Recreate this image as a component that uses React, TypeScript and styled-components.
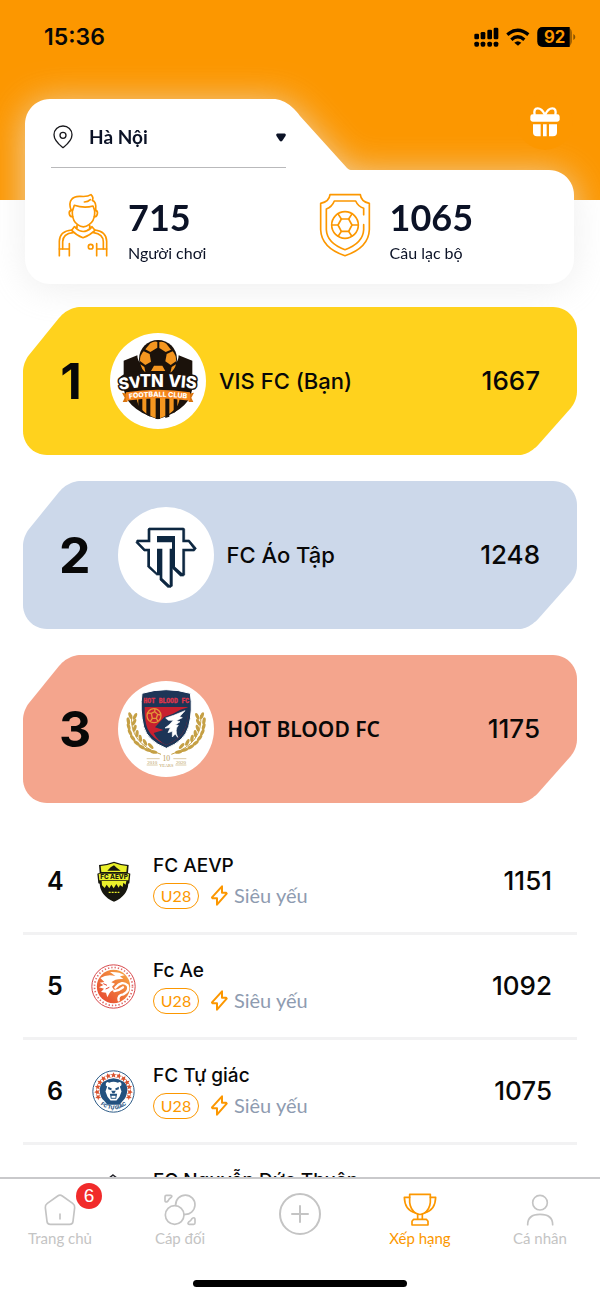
import React from 'react';
import styled, { createGlobalStyle } from 'styled-components';

const ORANGE = '#fc9700';
const INK = '#0b1226';
const UI = `Inter, "Liberation Sans", sans-serif`;
const SOFT = `Lato, "Noto Sans", sans-serif`;
const WIDE = `"Noto Sans", sans-serif`;

/* Responsive rounded outlines: each corner is anchored to a side of the box. */
type Pt = [number, number];
type Corner = { right?: boolean; bottom?: boolean; from: Pt; via: Pt; to: Pt };

const outline = (corners: Corner[]) => {
  const points: string[] = [];
  corners.forEach(({ right, bottom, from, via, to }) => {
    const ax = [via[0] - from[0], via[1] - from[1]];
    const bx = [to[0] - via[0], to[1] - via[1]];
    const cos = (ax[0] * bx[0] + ax[1] * bx[1]) / (Math.hypot(ax[0], ax[1]) * Math.hypot(bx[0], bx[1]));
    const w = Math.cos(Math.acos(cos) / 2);
    for (let i = 0; i <= 12; i += 1) {
      const t = i / 12;
      const a = (1 - t) * (1 - t);
      const b = 2 * w * t * (1 - t);
      const c = t * t;
      const at = (k: 0 | 1) => ((a * from[k] + b * via[k] + c * to[k]) / (a + b + c)).toFixed(2);
      points.push(`calc(${right ? 100 : 0}% + ${at(0)}px) calc(${bottom ? 100 : 0}% + ${at(1)}px)`);
    }
  });
  return `polygon(${points.join(', ')})`;
};

const podiumOutline = outline([
  { from: [0, 65], via: [0, 56], to: [6, 48] },
  { from: [36, 11], via: [45, 0], to: [58, 0] },
  { right: true, from: [-24, 0], via: [0, 0], to: [0, 24] },
  { right: true, bottom: true, from: [0, -64], via: [0, -54], to: [-7, -46] },
  { right: true, bottom: true, from: [-38, -11], via: [-48, 0], to: [-58, 0] },
  { bottom: true, from: [24, 0], via: [0, 0], to: [0, -24] },
]);

const summaryOutline = outline([
  { from: [0, 25], via: [0, 0], to: [25, 0] },
  { from: [248, 0], via: [263, 0], to: [275, 17] },
  { from: [322, 69], via: [324, 71], to: [326, 71] },
  { right: true, from: [-25, 71], via: [0, 71], to: [0, 96] },
  { right: true, bottom: true, from: [0, -25], via: [0, 0], to: [-25, 0] },
  { bottom: true, from: [25, 0], via: [0, 0], to: [0, -25] },
]);

const Global = createGlobalStyle`
  *, *::before, *::after { box-sizing: border-box; }
  body { margin: 0; background: #fff; font-family: ${UI}; color: #080808; }
  ol, h1, p { margin: 0; padding: 0; }
  ol { list-style: none; }
  svg { display: block; }
`;

const Screen = styled.div`
  display: flex;
  flex-direction: column;
  height: 100vh;
`;

const Scroller = styled.main`
  flex: 1;
  min-height: 0;
  overflow-y: auto;
  scrollbar-width: none;
  background: linear-gradient(${ORANGE}, ${ORANGE}) no-repeat 0 0 / 100% 200px;
`;

const StatusBar = styled.div`
  display: flex;
  align-items: center;
  justify-content: space-between;
  height: 73px;
  padding: 0 24px 0 44px;
`;

const Clock = styled.span`
  font-size: 23px;
  line-height: 28px;
  font-weight: 600;
`;

const StatusIcons = styled.div`
  display: flex;
  align-items: center;
  gap: 7px;
`;

const Hero = styled.header`
  display: grid;
  padding: 0 26px 0 25px;
  margin-top: 21px;
  > * { grid-area: 1 / 1; }
`;

const SummaryShadow = styled.div`
  margin-top: 5px;
  filter: drop-shadow(0 4px 18px rgba(232, 232, 232, 0.75));
`;

const Summary = styled.div`
  padding: 8px 0 0 26px;
  height: 185px;
  background: #fff;
  clip-path: ${summaryOutline};
`;

const GiftButton = styled.button`
  display: grid;
  place-items: center;
  justify-self: end;
  z-index: 1;
  width: 56px;
  height: 56px;
  margin-right: 1px;
  padding: 0;
  border: 0;
  border-radius: 50%;
  background: ${ORANGE};
`;

const CityField = styled.label`
  display: flex;
  align-items: center;
  gap: 16px;
  width: 235px;
  height: 61px;
  padding-left: 2px;
  border-bottom: 1px solid #b9b9bb;
`;

const CitySelect = styled.select`
  flex: 1;
  min-width: 0;
  height: 32px;
  padding: 0 0 2px;
  border: 0;
  appearance: none;
  background: transparent;
  font-family: ${SOFT};
  font-size: 19px;
  font-weight: 700;
  color: ${INK};
`;

const Stats = styled.div`
  display: grid;
  grid-template-columns: 1fr 1fr;
  padding-top: 25px;
`;

const Stat = styled.div`
  display: flex;
  gap: 19px;
  padding-left: 6px;
`;

const StatValue = styled.p`
  padding-top: 2px;
  font-family: ${SOFT};
  font-size: 36px;
  line-height: 44px;
  font-weight: 700;
  color: ${INK};
`;

const StatLabel = styled.p`
  font-family: ${SOFT};
  font-size: 16px;
  line-height: 28px;
  color: ${INK};
`;

const Podium = styled.ol`
  display: grid;
  gap: 26px;
  padding: 23px 23px 0;
`;

const PodiumCard = styled.li<{ $tone: string }>`
  display: flex;
  align-items: center;
  height: 148px;
  padding: 0 37px 0 36px;
  background: ${(p) => p.$tone};
  clip-path: ${podiumOutline};
`;

const Place = styled.span`
  min-width: 24px;
  margin-right: 27px;
  font-size: 50px;
  line-height: 56px;
  font-weight: 700;
  text-align: center;
`;

const Disc = styled.span`
  flex: none;
  width: 96px;
  height: 96px;
  margin-right: 13px;
  border-radius: 50%;
  background: #fff;
  overflow: hidden;
`;

const PodiumName = styled.span<{ $wide?: boolean }>`
  flex: 1;
  font-family: ${(p) => (p.$wide ? WIDE : UI)};
  font-size: ${(p) => (p.$wide ? 21 : 22)}px;
  line-height: 28px;
  font-weight: ${(p) => (p.$wide ? 600 : 500)};
`;

const Score = styled.span`
  font-size: 26px;
  line-height: 32px;
  font-weight: 500;
`;

const List = styled.ol`
  padding: 27px 23px 0;
`;

const Row = styled.li`
  display: flex;
  align-items: center;
  height: 105px;
  padding: 0 25px 0 24px;
  border-bottom: 3px solid #f2f2f3;
`;

const Rank = styled.span`
  width: 44px;
  font-size: 25px;
  line-height: 32px;
  font-weight: 600;
`;

const Crest = styled.span`
  flex: none;
  width: 45px;
  height: 45px;
  margin-right: 17px;
`;

const Info = styled.div`
  flex: 1;
  min-width: 0;
`;

const TeamName = styled.p`
  margin-bottom: 5px;
  font-size: 19px;
  line-height: 24px;
  font-weight: 500;
  white-space: nowrap;
`;

const Tags = styled.div`
  display: flex;
  align-items: center;
  font-family: ${SOFT};
`;

const Age = styled.span`
  display: grid;
  place-items: center;
  width: 46px;
  height: 26px;
  margin-right: 12px;
  border: 1px solid ${ORANGE};
  border-radius: 13px;
  font-size: 16px;
  line-height: 16px;
  color: ${ORANGE};
`;

const Level = styled.span`
  margin-left: 6px;
  padding-bottom: 2px;
  font-size: 20px;
  line-height: 24px;
  color: #8e9bb0;
`;

const TabBar = styled.nav`
  flex: none;
  border-top: 2px solid #c9c9cb;
  background: #fff;
`;

const Tabs = styled.div`
  display: grid;
  grid-template-columns: repeat(5, 1fr);
  height: 101px;
`;

const Tab = styled.a<{ $active?: boolean }>`
  display: flex;
  flex-direction: column;
  align-items: center;
  padding-top: 14px;
  font-family: ${SOFT};
  font-size: 15px;
  line-height: 20px;
  text-decoration: none;
  color: ${(p) => (p.$active ? ORANGE : '#c4c4c4')};
`;

const TabIcon = styled.span`
  position: relative;
  margin-bottom: 1px;
`;

const Badge = styled.span`
  position: absolute;
  top: -10px;
  left: 33px;
  display: grid;
  place-items: center;
  width: 26px;
  height: 26px;
  border-radius: 50%;
  background: #f12b2b;
  color: #fff;
  font-family: "Liberation Sans", sans-serif;
  font-size: 19px;
  line-height: 26px;
`;

const HomeIndicator = styled.div`
  width: 214px;
  height: 7px;
  margin: 0 auto 12px;
  border-radius: 4px;
  background: #000;
`;

const line = { fill: 'none', stroke: 'currentColor', strokeLinecap: 'round', strokeLinejoin: 'round' } as const;

const SignalIcon = () => (
  <svg width="25" height="20" viewBox="523 79 75 60" aria-hidden="true">
    {[[524, 99], [543, 94], [563, 87], [582, 81]].map(([x, y]) => (
      <g key={x}>
        <rect x={x} y={y} width="14" height={116 - y} rx="4" />
        <rect x={x} y="123" width="14" height="15" rx="5" />
      </g>
    ))}
  </svg>
);

const WifiIcon = () => (
  <svg width="24" height="18" viewBox="620 80 72 54" aria-hidden="true">
    <g fill="none" stroke="#000" strokeWidth="10">
      <path d="M624 100 Q655 74 687 100" />
      <path d="M636 115 Q655 98 675 115" />
    </g>
    <path d="M645 124 Q655 115 666 124 L656 133 Z" />
  </svg>
);

const BatteryIcon = () => (
  <svg width="39" height="20" viewBox="710 78 117 60" aria-label="92%">
    <rect x="711" y="78" width="104" height="60" rx="17" opacity=".35" />
    <path d="M728 78 H808 V138 H728 Q711 138 711 121 V95 Q711 78 728 78Z" />
    <path d="M819 99 Q825 102 825 108 Q825 114 819 117Z" opacity=".45" />
    <text x="763" y="126" textAnchor="middle" fontFamily="Inter, sans-serif" fontWeight="700" fontSize="50" fill={ORANGE}>92</text>
  </svg>
);

const GiftIcon = () => (
  <svg width="30" height="31" viewBox="690 320 90 93" fill="#fff" aria-hidden="true">
    <rect x="691" y="342" width="88" height="22" rx="7" />
    <path d="M699 372 H722 V408 H711 Q699 408 699 396Z M729 372 H740 V408 H729Z M747 372 H771 V396 Q771 408 759 408 H747Z" />
    <path d="M704 344 Q700 324 713 324 Q726 324 735 344 Q744 324 757 324 Q770 324 766 344" fill="none" stroke="#fff" strokeWidth="7" />
  </svg>
);

const PinIcon = () => (
  <svg width="20" height="24" viewBox="159 377 60 72" aria-hidden="true">
    <g fill="none" stroke="#1b1b1f" strokeWidth="4" strokeLinejoin="round">
      <path d="M189 445 C178 436 162 424 162 406 C162 391 174 380 189 380 C204 380 216 391 216 406 C216 424 200 436 189 445Z" />
      <circle cx="189" cy="408" r="9" />
    </g>
  </svg>
);

const CaretIcon = () => (
  <svg width="10" height="9" viewBox="0 0 10 9" fill={INK} aria-hidden="true">
    <path d="M1.400 .5 H8.600 Q10.400 1 9.500 3 L6.300 7.800 Q5 9.200 3.700 7.800 L.5 3 Q-.4 1 1.400 .5Z" />
  </svg>
);

const PlayerIcon = () => (
  <svg width="52" height="64" viewBox="170 580 156 192" color={ORANGE} aria-hidden="true">
    <g {...line} strokeWidth="5">
      <path d="M216 630 V642 Q217 664 232 675 Q249 688 266 675 Q282 664 283 642 V630" />
      <path d="M212 630 Q205 610 213 600 Q221 589 240 590 Q262 592 272 585 Q281 594 276 602 Q289 606 286 632" />
      <path d="M217 632 L222 617 Q252 627 278 619 L283 632 M252 607 Q263 607 270 600" />
      <path d="M213 632 Q205 634 207 643 Q209 652 217 651 M286 632 Q293 634 291 643 Q289 652 282 651" />
      <path d="M230 677 V684 L222 681 L214 692 Q228 707 248 714 Q269 707 284 692 L275 681 L268 684 V677" />
      <path d="M226 685 Q248 706 272 685" />
      <path d="M214 691 Q178 694 177 725 V768 M284 691 Q318 695 319 725 V768" />
      <path d="M218 699 Q188 702 187 726 V748 M280 699 Q309 704 309 726 V748" />
      <path d="M177 748 H207 M207 732 V768 M289 732 V768 M289 748 H319" />
      <circle cx="271" cy="741" r="7" />
    </g>
  </svg>
);

const ClubIcon = () => (
  <svg width="52" height="64" viewBox="55 580 156 192" color={ORANGE} aria-hidden="true">
    <g {...line} strokeWidth="5">
      <path d="M88 585 H179 Q181 606 206 611 V690 Q204 744 133 768 Q62 744 60 690 V611 Q86 606 88 585Z" />
      <path d="M189 645 V626 Q172 620 165 604 H101 Q94 622 77 628 V690 Q79 730 133 750 Q187 730 189 690 V675" />
      <circle cx="133" cy="676" r="40" />
      <path d="M122 658 H144 L154 676 L144 695 H122 L112 676Z" />
      <path d="M122 658 L113 644 M144 658 L153 644 M154 676 H172 M144 695 L153 709 M122 695 L113 709 M112 676 H94" />
    </g>
  </svg>
);

const BoltIcon = () => (
  <svg width="17" height="21" viewBox="574 134 51 63" color={ORANGE} aria-hidden="true">
    <path d="M607 138 L577 171 L579 174 H592 V193 L621 160 L619 157 H607Z" {...line} strokeWidth="6" />
  </svg>
);

const VisLogo = () => (
  <svg width="96" height="96" viewBox="30 25 288 288" aria-hidden="true">
    <path d="M71 108 L112 92 Q112 130 174 130 Q236 130 236 92 L277 108 V180 Q280 250 174 284 Q68 250 71 180Z" fill="#1b120b" />
    <circle cx="174" cy="103" r="57" fill="#1b120b" />
    <g fill="#f5961f">
      <path d="M151 56 Q163 48 172 52 V69 L151 82 L136 74Z" />
      <path d="M178 52 Q189 49 199 57 L213 75 L197 82 L178 70Z" />
      <path d="M131 80 L149 88 L153 111 L136 121 L120 109 Q119 92 131 80Z" />
      <path d="M218 80 Q230 93 228 110 L212 121 L196 110 L200 88Z" />
      <path d="M121 119 L133 127 L137 145 Q124 133 121 119Z M228 119 L215 127 L211 145 Q225 133 228 119Z M162 123 H187 L196 139 H153Z" />
    </g>
    <path d="M155 90 L174 77 L193 89 L187 114 H161Z" fill="#1b120b" />
    <path d="M110 220 H239 Q236 262 174 283 Q112 262 110 220Z" fill="#f5961f" />
    <path d="M115 220 H127 V265 L115 250Z M139 220 H151 V276 L139 270Z M167 220 H180 V283 H167Z M196 220 H208 V276 L196 280Z M221 220 H232 V256 L221 266Z" fill="#1b120b" />
    <path d="M56 172 Q58 150 92 140 L262 146 Q290 152 292 172 L286 194 H66Z" fill="#1b120b" />
    <g fontFamily="Inter, sans-serif" fontWeight="800" fill="#fff" stroke="#1b120b" strokeWidth="9" strokeLinejoin="round" paintOrder="stroke">
      <text fontSize="48" transform="rotate(-7 60 194)" x="58" y="195">SV</text>
      <text fontSize="50" x="119" y="186">TN</text>
      <text fontSize="50" transform="rotate(5 204 186)" x="203" y="185">VIS</text>
    </g>
    <path d="M66 204 L82 207 V232 H68 L74 219Z M282 204 L266 207 V232 H280 L274 219Z" fill="#d9740f" />
    <path d="M78 203 Q174 188 270 203 V228 Q174 213 78 228Z" fill="#f5861c" />
    <path id="ribbonArc" d="M80 223 Q174 209 268 223" fill="none" />
    <text fontFamily="Inter, sans-serif" fontSize="21" fontWeight="800" fill="#fff">
      <textPath href="#ribbonArc" startOffset="50%" textAnchor="middle">FOOTBALL CLUB</textPath>
    </text>
  </svg>
);

const AoTapLogo = () => (
  <svg width="96" height="96" viewBox="35 21 288 288" aria-hidden="true">
    <path d="M128 84 H232 L235 87 V120 H249 L270 145 L264 153 H235 V225 L231 228 H222 L198 205 V258 L194 262 H184 L161 240 V225 H151 L124 201 V153 H113 L89 128 L92 120 H125 V87Z" fill="#0d2741" stroke="#0d2741" strokeWidth="2" />
    <path d="M132 91 H228 V127 H246 L261 146 H228 V220 L206 200 V108 H152 V127 H197 V146 H190 V256 L168 235 V146 H152 V218 L131 198 V146 H116 L97 127 H132Z" fill="#fff" />
  </svg>
);

const laurel = [
  [76, 122, -20], [70, 138, -10], [71, 155, -15], [75, 172, -25], [83, 189, -38], [95, 204, -50], [110, 216, -62], [128, 225, -72], [146, 231, -80],
  [90, 124, 25], [87, 142, 28], [89, 160, 18], [96, 176, 5], [106, 190, -10], [120, 202, -25], [137, 213, -42],
];

const HotBloodLogo = () => (
  <svg width="96" height="96" viewBox="39 18 288 288" aria-hidden="true">
    {[undefined, 'translate(367 0) scale(-1 1)'].map((side, k) => (
      <g key={k} transform={side} fill="#c5a045">
        {laurel.map(([x, y, a]) => (
          <ellipse key={`${x}-${y}`} cx={x} cy={y} rx="5" ry="11" transform={`rotate(${a} ${x} ${y})`} />
        ))}
        <path d="M80 120 Q72 205 168 238" fill="none" stroke="#c5a045" strokeWidth="3" />
      </g>
    ))}
    <path d="M111 55 Q183 33 256 55 Q264 105 251 155 Q239 198 184 220 Q128 198 116 155 Q104 105 111 55Z" fill="#1d3557" stroke="#fff" strokeWidth="3" />
    <path d="M119 96 H248 Q250 140 238 165 Q226 192 184 210 Q142 192 128 162 Q118 138 119 96Z" fill="#c8202f" />
    <path d="M250 97 L226 104 L204 116 L178 126 L150 157 L175 165 L146 174 Q158 198 184 210 Q226 192 238 165 Q250 140 250 97Z" fill="#1d3557" />
    <path d="M240 107 L206 121 L182 129 L190 136 L205 136 L192 150 L180 159 L196 158 L189 173 L202 169 V186 L211 177 L218 187 Q208 164 220 151 L211 150 L225 140 L214 137 L232 128 L224 125Z" fill="#fff" stroke="#fff" strokeWidth="2" />
    <g fill="none" stroke="#e3953a" strokeWidth="4">
      <circle cx="147" cy="122" r="21" />
      <path d="M139 115 L149 110 L158 118 L154 130 H142Z M139 115 L127 114 M149 110 L150 101 M158 118 L167 120 M154 130 L159 139 M142 130 L136 139" />
    </g>
    <text x="184" y="85" textAnchor="middle" fontFamily="Liberation Mono, monospace" fontSize="19" fontWeight="700" fill="#e0354a" stroke="#e0354a">HOT BLOOD FC</text>
    <g fontFamily="Liberation Serif, serif" textAnchor="middle" fill="#b79a58">
      <text x="184" y="259" fontSize="23">10</text>
      <text x="184" y="275" fontSize="13">YEARS</text>
      <text x="142" y="266" fontSize="15">2010</text>
      <text x="228" y="266" fontSize="15">2020</text>
    </g>
    <path d="M125 251 H164 M205 251 H244 M125 270 H158 M211 270 H244" stroke="#c9b27b" strokeWidth="2" />
  </svg>
);

const AevpLogo = () => (
  <svg width="45" height="45" viewBox="213 53 135 135" aria-hidden="true">
    <path d="M282 61 Q302 69 326 71 L324 94 L331 97 L328 126 L325 127 Q323 163 282 181 Q241 163 239 127 L235 126 L232 97 L239 94 L237 71 Q262 69 282 61Z" fill="#17170f" />
    <path d="M282 65 Q302 72 321 74 L319 92 H244 L242 74 Q262 72 282 65Z M245 119 H319 L317 130 L310 124 L308 137 L300 131 L296 139 L289 128 L281 141 L274 130 L268 141 L260 130 L254 140 L246 132Z" fill="#eaf02b" />
    <path d="M262 88 L272 78 L282 72 L290 79 L302 88Z" fill="#17170f" />
    <path d="M236 97 H327 L325 117 H238Z" fill="#eaf02b" />
    <text x="282" y="114" textAnchor="middle" fontFamily="Inter, sans-serif" fontSize="19" fontWeight="800" fill="#17170f">FC AEVP</text>
    <path d="M266 153 H298" stroke="#eaf02b" strokeWidth="4" strokeDasharray="6 3" />
  </svg>
);

const DragonLogo = () => (
  <svg width="45" height="45" viewBox="213 368 135 135" aria-hidden="true">
    <defs>
      <linearGradient id="flame" x1="0" y1="1" x2="1" y2="0">
        <stop offset="0" stopColor="#e5402f" />
        <stop offset="1" stopColor="#f8ad45" />
      </linearGradient>
    </defs>
    <circle cx="280.500" cy="435.500" r="65" fill="#fff" stroke="#d8474a" strokeWidth="3" />
    <circle cx="280.500" cy="435.500" r="57" fill="none" stroke="#df6866" strokeWidth="5" strokeDasharray="4 6" />
    <circle cx="280.500" cy="435.500" r="50" fill="url(#flame)" />
    <path d="M241 410 Q260 398 286 404 L270 392 Q300 391 314 402 L300 405 L310 413 Q286 411 274 423 L285 427 L276 436 L283 447 Q272 448 267 458 L262 468 L258 454 L243 452 L252 442 L237 438 L250 431 L239 424 L253 422Z" fill="#fff" />
    <path d="M286 439 Q306 416 323 432 Q330 449 310 459 Q292 461 296 477 M283 449 Q300 446 309 438" fill="none" stroke="#fff" strokeWidth="7" strokeLinecap="round" />
    <path d="M250 427 L261 432 M257 443 L268 438" stroke="#e5402f" strokeWidth="3" />
  </svg>
);

const BearLogo = () => (
  <svg width="45" height="45" viewBox="214.500 82.500 135 135" aria-hidden="true">
    <circle cx="282" cy="150" r="62" fill="#fff" stroke="#2c5b87" strokeWidth="3" />
    <g fill="#d8532f">
      {[-110, -92, -74, -56, -38, -19, 0, 19, 38, 56, 74, 92, 110].map((a) => (
        <path key={a} transform={`rotate(${a} 282 150)`} d="M282 92 L285 98 L291 98 L286 102 L288 109 L282 105 L276 109 L278 102 L273 98 L279 98Z" />
      ))}
    </g>
    <path d="M252 121 Q282 100 312 121 Q325 130 323 150 Q321 168 310 178 L300 190 H264 L254 178 Q242 168 241 150 Q240 130 252 121Z" fill="#22517f" />
    <path d="M259 126 Q262 118 269 124 Q282 117 295 124 Q303 118 306 127 Q307 133 301 135 L306 150 L300 166 L291 177 H273 L264 166 L258 150 L263 135 Q257 133 259 126Z" fill="#fff" />
    <path d="M266 136 L277 141 L275 146 L266 143Z M298 136 L287 141 L289 146 L298 143Z M275 148 H289 L285 155 H279Z M271 157 H293 L290 172 H274Z" fill="#22517f" />
    <path d="M276 163 H288 V169 H276Z" fill="#fff" />
    <path id="bearArc" d="M240 186 Q282 222 324 186" fill="none" />
    <text fontFamily="Inter, sans-serif" fontSize="15" fontWeight="800" fill="#22517f">
      <textPath href="#bearArc" startOffset="50%" textAnchor="middle">FC TỰ GIÁC</textPath>
    </text>
  </svg>
);

const PeakLogo = () => (
  <svg width="45" height="45" viewBox="0 0 45 45" aria-hidden="true">
    <path d="M22 1 L36 12 V32 L22 43 L8 32 V12Z" fill="#f3f3fb" stroke="#26262c" strokeWidth="1.500" />
    <path d="M22 3 L27 8 H17Z" fill="#5356a8" />
  </svg>
);

const HomeIcon = () => (
  <svg width="34" height="34" viewBox="129 70 102 102" aria-hidden="true">
    <g {...line} strokeWidth="5">
      <path d="M173 79 Q180 74 187 79 L218 101 Q225 106 224 114 L219 155 Q218 164 209 164 H151 Q142 164 141 155 L136 114 Q135 106 142 101Z" />
      <path d="M180 133 V148" />
    </g>
  </svg>
);

const MatchIcon = () => (
  <svg width="34" height="34" viewBox="489 70 102 102" aria-hidden="true">
    <g {...line} strokeWidth="5">
      <circle cx="524" cy="136" r="28" />
      <path d="M527 106 A29 29 0 1 1 553 134" />
      <path d="M499 77 H512 Q518 78 514 83 Q507 87 504 94 Q497 100 495 94 V81 Q495 77 499 77Z" />
      <path d="M581 164 H568 Q561 162 566 157 Q573 153 576 147 Q583 141 585 148 V160 Q585 164 581 164Z" />
    </g>
  </svg>
);

const PlusIcon = () => (
  <svg width="42" height="42" viewBox="0 0 42 42" aria-hidden="true">
    <g {...line} strokeWidth="2">
      <circle cx="21" cy="21" r="20" />
      <path d="M21 13 V29 M13 21 H29" />
    </g>
  </svg>
);

const TrophyIcon = () => (
  <svg width="34" height="34" viewBox="308 70 102 102" aria-hidden="true">
    <g {...line} strokeWidth="5">
      <path d="M328 74 H390 V98 Q388 120 371 131 Q359 138 347 131 Q330 120 328 98Z" />
      <path d="M328 83 H312 Q313 122 345 130 M390 83 H406 Q405 122 373 130" />
      <path d="M352 134 V149 M366 134 V149 M340 149 H378 L383 155 V166 H335 V155Z" />
    </g>
  </svg>
);

const PersonIcon = () => (
  <svg width="34" height="34" viewBox="668 70 102 102" aria-hidden="true">
    <g {...line} strokeWidth="5">
      <circle cx="719" cy="99" r="22" />
      <path d="M682 165 Q682 134 719 134 Q757 134 757 165" />
    </g>
  </svg>
);

const leaders = [
  { name: 'VIS FC (Bạn)', score: 1667, tone: '#ffd21d', Logo: VisLogo },
  { name: 'FC Áo Tập', score: 1248, tone: '#ccd8ea', Logo: AoTapLogo },
  { name: 'HOT BLOOD FC', score: 1175, tone: '#f4a58d', Logo: HotBloodLogo, wide: true },
];

const teams = [
  { name: 'FC AEVP', score: 1151, Logo: AevpLogo },
  { name: 'Fc Ae', score: 1092, Logo: DragonLogo },
  { name: 'FC Tự giác', score: 1075, Logo: BearLogo },
  { name: 'FC Nguyễn Đức Thuận', score: 1066, Logo: PeakLogo },
];

export default function App() {
  return (
    <Screen>
      <Global />
      <Scroller>
        <StatusBar>
          <Clock>15:36</Clock>
          <StatusIcons>
            <SignalIcon />
            <WifiIcon />
            <BatteryIcon />
          </StatusIcons>
        </StatusBar>

        <Hero>
          <SummaryShadow>
            <Summary>
              <CityField>
                <PinIcon />
                <CitySelect aria-label="Thành phố" defaultValue="hn">
                  <option value="hn">Hà Nội</option>
                </CitySelect>
                <CaretIcon />
              </CityField>
              <Stats>
                <Stat>
                  <PlayerIcon />
                  <div>
                    <StatValue>715</StatValue>
                    <StatLabel>Người chơi</StatLabel>
                  </div>
                </Stat>
                <Stat>
                  <ClubIcon />
                  <div>
                    <StatValue>1065</StatValue>
                    <StatLabel>Câu lạc bộ</StatLabel>
                  </div>
                </Stat>
              </Stats>
            </Summary>
          </SummaryShadow>
          <GiftButton aria-label="Quà tặng">
            <GiftIcon />
          </GiftButton>
        </Hero>

        <Podium>
          {leaders.map(({ name, score, tone, Logo, wide }, i) => (
            <PodiumCard key={name} $tone={tone}>
              <Place>{i + 1}</Place>
              <Disc><Logo /></Disc>
              <PodiumName $wide={wide}>{name}</PodiumName>
              <Score>{score}</Score>
            </PodiumCard>
          ))}
        </Podium>

        <List start={4}>
          {teams.map(({ name, score, Logo }, i) => (
            <Row key={name}>
              <Rank>{i + 4}</Rank>
              <Crest><Logo /></Crest>
              <Info>
                <TeamName>{name}</TeamName>
                <Tags>
                  <Age>U28</Age>
                  <BoltIcon />
                  <Level>Siêu yếu</Level>
                </Tags>
              </Info>
              <Score>{score}</Score>
            </Row>
          ))}
        </List>
      </Scroller>

      <TabBar>
        <Tabs>
          <Tab href="#home">
            <TabIcon><HomeIcon /><Badge>6</Badge></TabIcon>
            Trang chủ
          </Tab>
          <Tab href="#match">
            <TabIcon><MatchIcon /></TabIcon>
            Cáp đối
          </Tab>
          <Tab href="#create" aria-label="Tạo mới">
            <TabIcon><PlusIcon /></TabIcon>
          </Tab>
          <Tab href="#ranking" $active aria-current="page">
            <TabIcon><TrophyIcon /></TabIcon>
            Xếp hạng
          </Tab>
          <Tab href="#profile">
            <TabIcon><PersonIcon /></TabIcon>
            Cá nhân
          </Tab>
        </Tabs>
        <HomeIndicator />
      </TabBar>
    </Screen>
  );
}
